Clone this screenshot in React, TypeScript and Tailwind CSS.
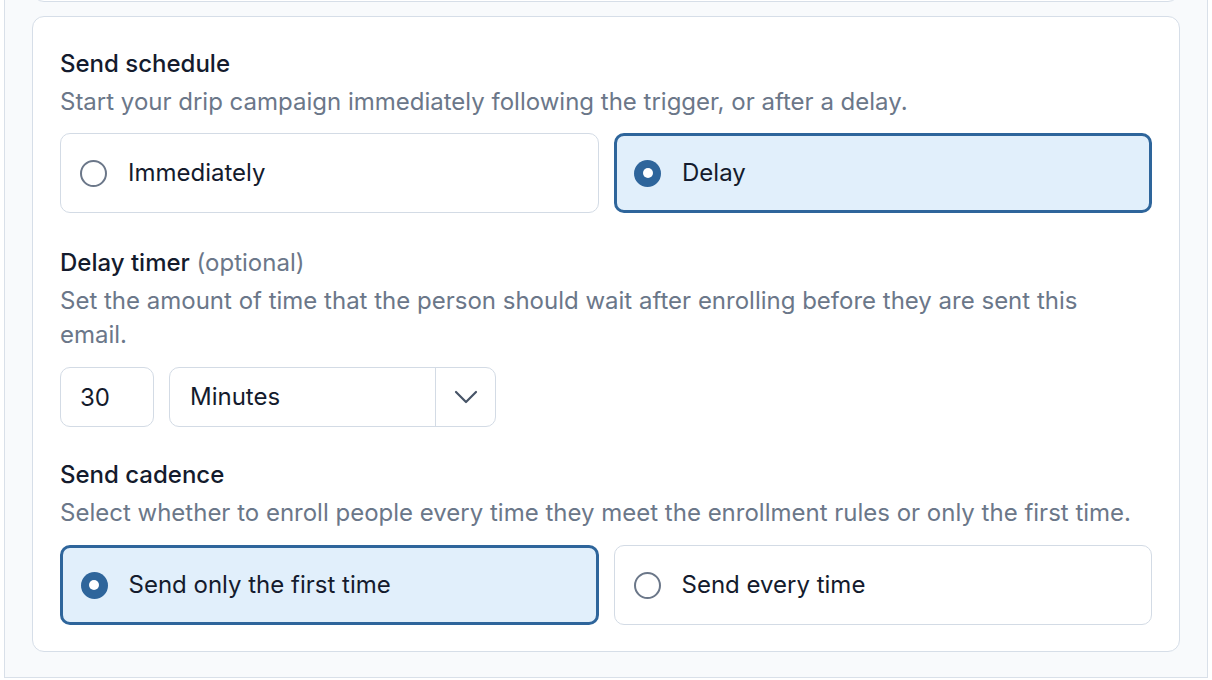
import { useState } from "react";

type Option = { value: string; label: string };

/* ---------- Radio card ---------- */
function RadioCard({
  option,
  checked,
  onSelect,
}: {
  option: Option;
  checked: boolean;
  onSelect: () => void;
}) {
  return (
    <button
      type="button"
      onClick={onSelect}
      className={
        checked
          ? "flex h-[80px] items-center rounded-[10px] border-[3px] border-[#2e659b] bg-[#e1effb] pl-[17.5px] text-left"
          : "flex h-[80px] items-center rounded-[10px] border-[1.5px] border-[#d3dbe5] bg-white pl-[19px] text-left"
      }
    >
      {checked ? (
        <span className="flex h-[27px] w-[27px] shrink-0 items-center justify-center rounded-full bg-[#2e659b]">
          <span className="h-[10px] w-[10px] rounded-full bg-white" />
        </span>
      ) : (
        <span className="h-[27px] w-[27px] shrink-0 rounded-full border-2 border-[#6b7789] bg-white" />
      )}
      <span className="ml-[21px] text-[24px] leading-[34px] text-[#141b2d]">
        {option.label}
      </span>
    </button>
  );
}

function Section({
  title,
  optional,
  description,
}: {
  title: string;
  optional?: boolean;
  description: string;
}) {
  return (
    <>
      <h3 className="text-[24px] leading-[34px] font-medium text-[#141b2d]">
        {title}
        {optional && (
          <span className="font-normal text-[#6b7789]"> (optional)</span>
        )}
      </h3>
      <p className="mt-[4px] max-w-[1078px] text-[24px] leading-[34px] text-[#6b7789]">
        {description}
      </p>
    </>
  );
}

export default function App() {
  const [schedule, setSchedule] = useState("delay");
  const [cadence, setCadence] = useState("first");

  const scheduleOptions: Option[] = [
    { value: "immediately", label: "Immediately" },
    { value: "delay", label: "Delay" },
  ];
  const cadenceOptions: Option[] = [
    { value: "first", label: "Send only the first time" },
    { value: "every", label: "Send every time" },
  ];

  return (
    <div className="h-[680px] w-[1212px] overflow-hidden bg-white font-['Inter',sans-serif]">
      <div className="mx-[4px] -mt-[40px] flex flex-col gap-[14px] border-x-[1.5px] border-b-[1.5px] border-[#d9e0e9] bg-[#f8fafc] px-[27px] pb-[25px]">
        {/* Previous card, only its bottom edge is visible */}
        <div className="h-[42px] rounded-[12px] border-[1.5px] border-[#d6dee8] bg-white" />

        {/* Schedule card */}
        <div className="rounded-[12px] border-[1.5px] border-[#d6dee8] bg-white px-[27px] pt-[30px] pb-[26px]">
          <Section
            title="Send schedule"
            description="Start your drip campaign immediately following the trigger, or after a delay."
          />
          <div className="mt-[14px] grid grid-cols-2 gap-[15px]">
            {scheduleOptions.map((o) => (
              <RadioCard
                key={o.value}
                option={o}
                checked={schedule === o.value}
                onSelect={() => setSchedule(o.value)}
              />
            ))}
          </div>

          {/* Delay timer */}
          <div className="mt-[33px]">
            <Section
              title="Delay timer"
              optional
              description="Set the amount of time that the person should wait after enrolling before they are sent this email."
            />
            <div className="mt-[15px] flex gap-[15px]">
              <input
                defaultValue="30"
                className="h-[60px] w-[94px] rounded-[10px] border-[1.5px] border-[#d3dbe5] px-[19px] text-[24px] text-[#141b2d] outline-none"
              />
              <div className="flex h-[60px] w-[327px] rounded-[10px] border-[1.5px] border-[#d3dbe5]">
                <span className="flex flex-1 items-center pl-[20px] text-[24px] text-[#141b2d]">
                  Minutes
                </span>
                <span className="flex w-[60px] items-center justify-center border-l-[1.5px] border-[#d3dbe5]">
                  <svg width="24" height="14" viewBox="0 0 24 14" fill="none">
                    <path
                      d="M2 2 L12 12 L22 2"
                      stroke="#475467"
                      strokeWidth="2.2"
                      strokeLinecap="round"
                      strokeLinejoin="round"
                    />
                  </svg>
                </span>
              </div>
            </div>
          </div>

          {/* Send cadence */}
          <div className="mt-[31px]">
            <Section
              title="Send cadence"
              description="Select whether to enroll people every time they meet the enrollment rules or only the first time."
            />
            <div className="mt-[15px] grid grid-cols-2 gap-[15px]">
              {cadenceOptions.map((o) => (
                <RadioCard
                  key={o.value}
                  option={o}
                  checked={cadence === o.value}
                  onSelect={() => setCadence(o.value)}
                />
              ))}
            </div>
          </div>
        </div>
      </div>
    </div>
  );
}
